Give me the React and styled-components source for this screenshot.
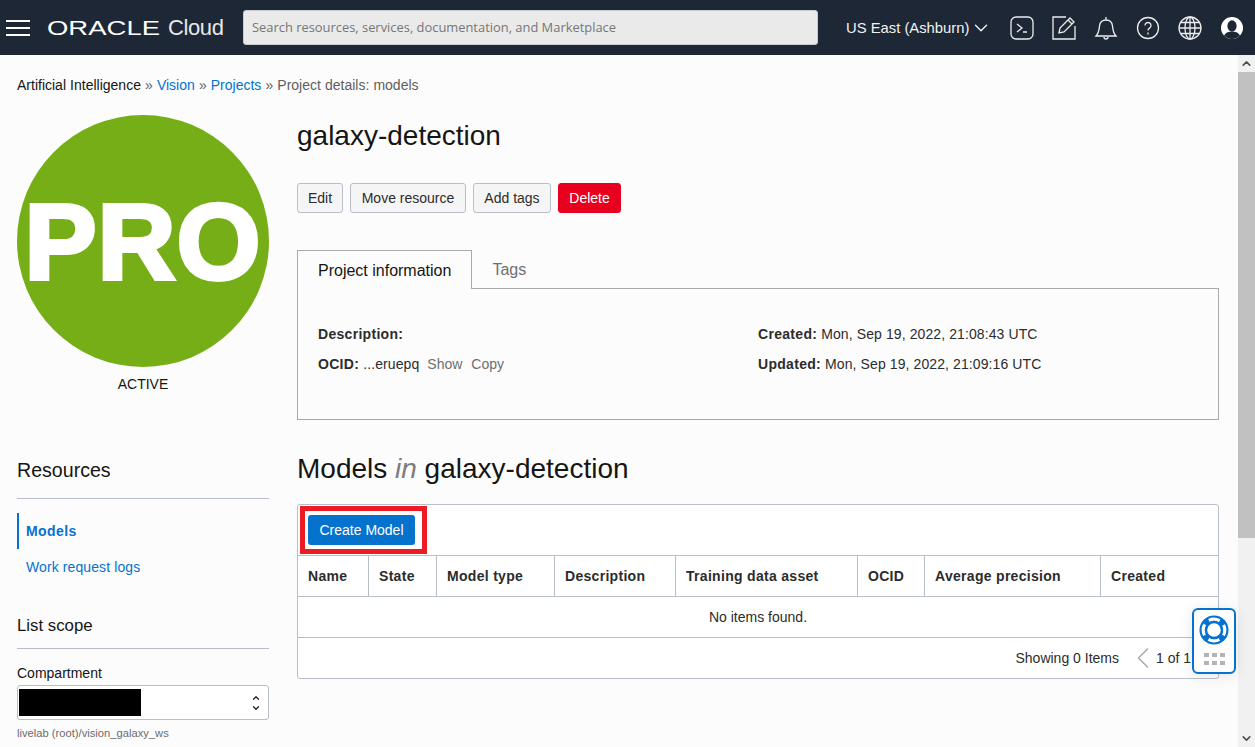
import React from 'react';
import styled, { createGlobalStyle } from 'styled-components';
import { ChevronDown, ChevronLeft, ChevronUp } from 'lucide-react';

const GlobalStyle = createGlobalStyle`
	html, body {
		margin: 0;
		height: 100%;
		overflow: hidden;
		background: #fcfcfc;
		font-family: 'Liberation Sans', Arial, sans-serif;
		color: #161513;
	}
	* { box-sizing: border-box; }
`;

const Page = styled.div`
	display: flex;
	flex-direction: column;
	height: 747px;
`;

const Header = styled.header`
	display: flex;
	align-items: center;
	flex: 0 0 55px;
	background: #1d2735;
	color: #fff;
	padding-left: 6px;
`;

const Burger = styled.div`
	display: flex;
	flex-direction: column;
	gap: 5px;
	width: 24px;
	margin-right: 17px;
	span {
		height: 2px;
		background: #fff;
	}
`;

const Logo = styled.svg`
	width: 113px;
	height: 24px;
	margin-right: 8px;
`;

const Cloud = styled.span`
	font-size: 22px;
	color: #e8e8e8;
	letter-spacing: -0.4px;
	width: 75px;
`;

const Search = styled.div`
	width: 575px;
	height: 35px;
	background: #eaeaea;
	border: 1px solid #c8ccd0;
	border-radius: 3px;
	color: #767676;
	font-family: 'Open Sans', sans-serif;
	font-size: 12.9px;
	line-height: 33px;
	padding-left: 8px;
	white-space: nowrap;
	overflow: hidden;
`;

const Region = styled.div`
	display: flex;
	align-items: center;
	gap: 1px;
	margin-left: 28px;
	margin-right: 18px;
	font-size: 14.8px;
	color: #f2f2f2;
	white-space: nowrap;
`;

const IconRow = styled.div`
	display: flex;
	align-items: center;
	gap: 18px;
`;

const HeaderIcon = styled.svg`
	width: 24px;
	height: 24px;
	fill: none;
	stroke: #ededed;
	stroke-width: 1.3;
`;

const Body = styled.div`
	display: flex;
	flex: 1;
	min-height: 0;
`;

const Main = styled.main`
	flex: 1;
	min-width: 0;
	padding: 22px 19px 0 17px;
	overflow: hidden;
	position: relative;
`;

const Scrollbar = styled.div`
	display: flex;
	flex-direction: column;
	flex: 0 0 17px;
	background: #f1f1f1;
	color: #505050;
`;

const ScrollButton = styled.div`
	display: flex;
	align-items: center;
	justify-content: center;
	flex: 0 0 17px;
`;

const ScrollThumb = styled.div`
	flex: 0 0 466px;
	background: #c1c1c1;
`;

const ScrollTrack = styled.div`
	flex: 1;
`;

const Crumbs = styled.div`
	font-size: 14px;
	line-height: 17px;
	color: #5f5f5f;
	word-spacing: 0.2px;
	margin-bottom: 21px;
`;

const Crumb = styled.span`
	color: ${p => (p.$link ? '#0572ce' : p.$dark ? '#161513' : '#5f5f5f')};
`;

const Columns = styled.div`
	display: flex;
	gap: 28px;
`;

const Side = styled.aside`
	flex: 0 0 252px;
`;

const Content = styled.div`
	flex: 1;
	min-width: 0;
`;

const Badge = styled.div`
	display: flex;
	align-items: center;
	justify-content: center;
	width: 252px;
	height: 252px;
	border-radius: 50%;
	background: #76ae17;
	color: #fff;
	font-weight: 700;
	font-size: 108px;
	letter-spacing: 1px;
	-webkit-text-stroke: 4px #fff;
	overflow: hidden;
`;

const Status = styled.div`
	text-align: center;
	font-size: 14px;
	line-height: 17px;
	margin-top: 9px;
	margin-bottom: 66px;
`;

const SideTitle = styled.h3`
	margin: 0;
	padding-bottom: ${p => (p.$small ? 12 : 16)}px;
	border-bottom: 1px solid #b8bec7;
	font-size: ${p => (p.$small ? 16.8 : 19.6)}px;
	font-weight: 400;
	line-height: ${p => (p.$small ? 20 : 23)}px;
`;

const NavList = styled.nav`
	display: flex;
	flex-direction: column;
	margin: 14px 0 31px;
`;

const NavItem = styled.a`
	display: block;
	height: 36px;
	line-height: 36px;
	padding-left: 7px;
	font-size: 14px;
	color: #0572ce;
	font-weight: ${p => (p.$active ? 700 : 400)};
	letter-spacing: ${p => (p.$active ? 0.4 : 0.1)}px;
	border-left: 2px solid ${p => (p.$active ? '#0572ce' : 'transparent')};
`;

const FieldLabel = styled.div`
	margin-top: 16px;
	font-size: 14px;
	line-height: 17px;
	margin-bottom: 3px;
`;

const Select = styled.div`
	display: flex;
	align-items: center;
	justify-content: space-between;
	height: 35px;
	padding: 3px 7px 3px 1px;
	background: #fff;
	border: 1px solid #b8bec7;
	border-radius: 3px;
`;

const Redaction = styled.div`
	width: 122px;
	height: 27px;
	background: #000;
`;

const SelectArrows = styled.div`
	display: flex;
	flex-direction: column;
	color: #222;
`;

const Hint = styled.div`
	margin-top: 6px;
	font-size: 11.2px;
	line-height: 14px;
	color: #6b6b6b;
`;

const Title = styled.h1`
	margin: 0 0 31px;
	padding-top: 4px;
	font-size: 28px;
	font-weight: 400;
	line-height: 33px;
`;

const Actions = styled.div`
	display: flex;
	gap: 7px;
	margin-bottom: 37px;
`;

const Button = styled.button`
	width: ${p => p.$width}px;
	height: 30px;
	padding: 0;
	font-family: inherit;
	font-size: 14px;
	border-radius: 3px;
	border: 1px solid ${p => (p.$danger ? '#e8001f' : '#b8bec7')};
	background: ${p => (p.$danger ? '#e8001f' : '#f5f5f5')};
	color: ${p => (p.$danger ? '#fff' : '#2c2c2c')};
`;

const Tabs = styled.div`
	display: flex;
	align-items: flex-start;
`;

const Tab = styled.div`
	height: ${p => (p.$active ? 39 : 38)}px;
	padding: 0 20px;
	font-size: 16px;
	line-height: 39px;
	color: ${p => (p.$active ? '#161513' : '#6f6f6f')};
	background: ${p => (p.$active ? '#fcfcfc' : 'transparent')};
	border: ${p => (p.$active ? '1px solid #a9a9a9' : 'none')};
	border-bottom: none;
	margin-bottom: -1px;
	position: relative;
`;

const InfoPanel = styled.section`
	display: grid;
	grid-template-columns: 440px 1fr;
	grid-auto-rows: 30px;
	align-content: start;
	height: 132px;
	padding: 30px 20px 0;
	border: 1px solid #a9a9a9;
	font-size: 14px;
	letter-spacing: 0.1px;
	line-height: 30px;
	color: #2c2c2c;
	b {
		letter-spacing: 0.3px;
	}
`;

const Muted = styled.span`
	color: #6f6f6f;
	letter-spacing: 0;
	margin-left: ${p => p.$gap || 0}px;
`;

const SectionTitle = styled.h2`
	margin: 32px 0 19px;
	font-size: 28px;
	font-weight: 400;
	line-height: 33px;
	em {
		color: #7d7d7d;
	}
`;

const TableCard = styled.div`
	border: 1px solid #b8bec7;
	border-radius: 3px;
	background: #fff;
`;

const TableToolbar = styled.div`
	display: flex;
	align-items: center;
	height: 50px;
	padding-left: 10px;
`;

const Highlighted = styled.div`
	position: relative;
	&::after {
		content: '';
		position: absolute;
		inset: -9px -12px -9px -8px;
		border: 5px solid #ed1c24;
		pointer-events: none;
	}
`;

const PrimaryButton = styled.button`
	display: block;
	width: 107px;
	height: 30px;
	padding: 0;
	border: none;
	border-radius: 3px;
	background: #0572ce;
	color: #fff;
	font-family: inherit;
	font-size: 14px;
`;

const HeadRow = styled.div`
	display: grid;
	grid-template-columns: 70px 68px 118px 121px 182px 67px 176px 1fr;
	height: 42px;
	border-top: 1px solid #b8bec7;
	border-bottom: 1px solid #b8bec7;
`;

const HeadCell = styled.div`
	padding-left: 10px;
	font-size: 14px;
	font-weight: 700;
	letter-spacing: 0.3px;
	line-height: 40px;
	color: #2c2c2c;
	white-space: nowrap;
	& + & {
		border-left: 1px solid #b8bec7;
	}
`;

const EmptyRow = styled.div`
	height: 41px;
	line-height: 40px;
	text-align: center;
	font-size: 14px;
	border-bottom: 1px solid #b8bec7;
	color: #2c2c2c;
`;

const Pager = styled.div`
	display: flex;
	align-items: center;
	justify-content: flex-end;
	height: 40px;
	padding-right: 27px;
	font-size: 14px;
	color: #2c2c2c;
	white-space: nowrap;
`;

const PagerArrow = styled.span`
	display: flex;
	margin: 0 -5px 0 6px;
	color: #a9a9a9;
`;

const HelpWidget = styled.div`
	position: absolute;
	left: 1192px;
	top: 608px;
	display: flex;
	flex-direction: column;
	align-items: center;
	width: 44px;
	height: 66px;
	padding-top: 5px;
	background: #fff;
	border: 2px solid #0572ce;
	border-radius: 6px;
	box-shadow: 0 2px 14px rgba(0, 0, 0, 0.1);
`;

const Dots = styled.div`
	display: grid;
	grid-template-columns: repeat(3, 5px);
	gap: 4px 3px;
	margin-top: 8px;
	i {
		height: 4px;
		background: #b4b4b4;
	}
`;

const columns = ['Name', 'State', 'Model type', 'Description', 'Training data asset', 'OCID', 'Average precision', 'Created'];

const App = () => (
	<Page>
		<GlobalStyle />
		<Header>
			<Burger><span /><span /><span /></Burger>
			<Logo viewBox="0 0 113 24">
				<text x="0" y="18.5" fill="#fff" fontFamily="Liberation Sans" fontSize="20.5" textLength="113" lengthAdjust="spacingAndGlyphs">ORACLE</text>
			</Logo>
			<Cloud>Cloud</Cloud>
			<Search>Search resources, services, documentation, and Marketplace</Search>
			<Region>US East (Ashburn) <ChevronDown size={22} strokeWidth={1.5} /></Region>
			<IconRow>
				<HeaderIcon viewBox="0 0 24 24">
					<rect x="1" y="1" width="22" height="22" rx="5" />
					<path d="M7 8l5 4-5 4M13 16h4" />
				</HeaderIcon>
				<HeaderIcon viewBox="0 0 24 24">
					<path d="M14 1H1v22h22V10" />
					<path d="M7 17l1-5L18 2l4 4-10 10zM16 4l4 4" />
				</HeaderIcon>
				<HeaderIcon viewBox="0 0 24 24">
					<path d="M2 20c3-3 3-6 3.500-10C6 6 9 4 12 4s6 2 6.500 6c.5 4 .5 7 3.500 10zM12 1v3M10 21a2 2 0 0 0 4 0" />
				</HeaderIcon>
				<HeaderIcon viewBox="0 0 24 24">
					<circle cx="12" cy="12" r="10.500" />
					<path d="M9 9.500a3 3 0 1 1 4.500 2.600c-1 .6-1.500 1.200-1.500 2.400M12 16.500v2" />
				</HeaderIcon>
				<HeaderIcon viewBox="0 0 24 24">
					<circle cx="12" cy="12" r="11" />
					<ellipse cx="12" cy="12" rx="5" ry="11" />
					<path d="M12 1v22M1 12h22M3 6.500h18M3 17.500h18" />
				</HeaderIcon>
				<svg width="24" height="24" viewBox="0 0 24 24">
					<circle cx="12" cy="12" r="11" fill="#fff" />
					<ellipse cx="12" cy="10" rx="4.600" ry="5.800" fill="#1d2735" />
					<path d="M4 19.500c2-3.500 5-3.800 8-3.800s6 .3 8 3.800c-2 2.200-5 3.400-8 3.400s-6-1.200-8-3.400z" fill="#1d2735" />
				</svg>
			</IconRow>
		</Header>
		<Body>
			<Main>
				<Crumbs>
					<Crumb $dark>Artificial Intelligence</Crumb> » <Crumb $link>Vision</Crumb> » <Crumb $link>Projects</Crumb> » Project details: models
				</Crumbs>
				<Columns>
					<Side>
						<Badge>PRO</Badge>
						<Status>ACTIVE</Status>
						<SideTitle>Resources</SideTitle>
						<NavList>
							<NavItem $active>Models</NavItem>
							<NavItem>Work request logs</NavItem>
						</NavList>
						<SideTitle $small>List scope</SideTitle>
						<FieldLabel>Compartment</FieldLabel>
						<Select>
							<Redaction />
							<SelectArrows>
								<ChevronUp size={10} strokeWidth={3} />
								<ChevronDown size={10} strokeWidth={3} />
							</SelectArrows>
						</Select>
						<Hint>livelab (root)/vision_galaxy_ws</Hint>
					</Side>
					<Content>
						<Title>galaxy-detection</Title>
						<Actions>
							<Button $width={46}>Edit</Button>
							<Button $width={116}>Move resource</Button>
							<Button $width={78}>Add tags</Button>
							<Button $width={63} $danger>Delete</Button>
						</Actions>
						<Tabs>
							<Tab $active>Project information</Tab>
							<Tab>Tags</Tab>
						</Tabs>
						<InfoPanel>
							<div><b>Description:</b></div>
							<div><b>Created:</b> Mon, Sep 19, 2022, 21:08:43 UTC</div>
							<div><b>OCID:</b> ...eruepq <Muted $gap={4}>Show</Muted><Muted $gap={9}>Copy</Muted></div>
							<div><b>Updated:</b> Mon, Sep 19, 2022, 21:09:16 UTC</div>
						</InfoPanel>
						<SectionTitle>Models <em>in</em> galaxy-detection</SectionTitle>
						<TableCard>
							<TableToolbar>
								<Highlighted>
									<PrimaryButton>Create Model</PrimaryButton>
								</Highlighted>
							</TableToolbar>
							<HeadRow>
								{columns.map(name => <HeadCell key={name}>{name}</HeadCell>)}
							</HeadRow>
							<EmptyRow>No items found.</EmptyRow>
							<Pager>
								Showing 0 Items
								<PagerArrow><ChevronLeft size={36} strokeWidth={1} /></PagerArrow>
								1 of 1
							</Pager>
						</TableCard>
					</Content>
				</Columns>
			</Main>
			<Scrollbar>
				<ScrollButton><ChevronUp size={13} strokeWidth={3} /></ScrollButton>
				<ScrollThumb />
				<ScrollTrack />
				<ScrollButton><ChevronDown size={13} strokeWidth={3} /></ScrollButton>
			</Scrollbar>
		</Body>
		<HelpWidget>
			<svg width="30" height="30" viewBox="0 0 32 32">
				<circle cx="16" cy="16" r="15.500" fill="#0572ce" />
				<circle cx="16" cy="16" r="11.500" fill="none" stroke="#fff" strokeWidth="3.500" strokeDasharray="12 6.060" strokeDashoffset="6" />
				<circle cx="16" cy="16" r="8.500" fill="#fff" stroke="#0572ce" strokeWidth="2.500" />
			</svg>
			<Dots><i /><i /><i /><i /><i /><i /></Dots>
		</HelpWidget>
	</Page>
);

export default App;
